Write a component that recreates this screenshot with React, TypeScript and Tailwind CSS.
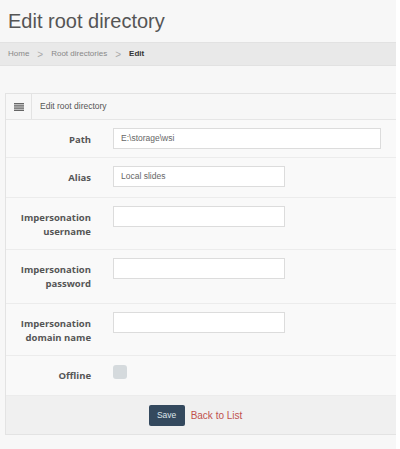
import React from 'react';

const rows = [
  { label: ['Path'], h: 'h-[38px]', value: 'E:\\storage\\wsi', wide: true },
  { label: ['Alias'], h: 'h-[40px]', value: 'Local slides' },
  { label: ['Impersonation', 'username'], h: 'h-[52px]', value: '' },
  { label: ['Impersonation', 'password'], h: 'h-[54px]', value: '' },
  { label: ['Impersonation', 'domain name'], h: 'h-[52px]', value: '' },
];

export default function App() {
  return (
    <div className="w-[400px] h-[449px] bg-white overflow-hidden font-['Liberation_Sans',Arial,sans-serif]">
      <div className="w-[396px] h-full bg-[#f7f7f7]">
        {/* Page title */}
        <h1 className="h-[42px] px-[8px] pt-[9px] text-[20px] leading-[24px] text-[#555]">
          Edit root directory
        </h1>

        {/* Breadcrumb */}
        <div className="h-[24px] bg-[#e9e9e9] border-y border-[#e2e2e2] flex items-center px-[8px] text-[8px] text-[#888]">
          <span>Home</span>
          <span className="mx-[8px] text-[10px] text-[#aaa]">&gt;</span>
          <span>Root directories</span>
          <span className="mx-[8px] text-[10px] text-[#aaa]">&gt;</span>
          <span className="font-bold text-[#333]">Edit</span>
        </div>

        <div className="h-[27px]" />

        {/* Panel */}
        <div className="ml-[5px] border border-r-0 border-[#e3e3e3] bg-[#f9f9f9]">
          <div className="h-[26px] flex items-center border-b border-[#e6e6e6] bg-[#f7f7f7]">
            <div className="w-[26px] h-full flex items-center justify-center border-r border-[#e3e3e3]">
              <svg width="10" height="8" viewBox="0 0 10 8">
                <rect x="0" y="0" width="10" height="1.4" fill="#666" />
                <rect x="0" y="2.2" width="10" height="1.4" fill="#666" />
                <rect x="0" y="4.4" width="10" height="1.4" fill="#666" />
                <rect x="0" y="6.6" width="10" height="1.4" fill="#666" />
              </svg>
            </div>
            <span className="ml-[8px] text-[8.5px] text-[#555]">Edit root directory</span>
          </div>

          {rows.map((r, i) => (
            <div key={i} className={`${r.h} flex pt-[8px] border-b border-[#ececec]`}>
              <div className="w-[85px] pt-[5px] text-right font-['Open_Sans',sans-serif] font-bold text-[9.5px] leading-[14px] text-[#555]">
                {r.label.map((l, j) => (
                  <div key={j}>{l}</div>
                ))}
              </div>
              <div
                className={`ml-[22px] h-[21px] ${r.wide ? 'w-[268px]' : 'w-[172px]'} bg-white border border-[#dcdcdc] flex items-center px-[7px] text-[8.5px] text-[#666]`}
              >
                {r.value}
              </div>
            </div>
          ))}

          <div className="h-[39px] flex pt-[9px]">
            <div className="w-[85px] pt-[4px] text-right font-['Open_Sans',sans-serif] font-bold text-[9.5px] leading-[14px] text-[#555]">
              Offline
            </div>
            <div className="ml-[22px] w-[14px] h-[14px] rounded-[3px] bg-[#d5dadd]" />
          </div>

          <div className="h-[39px] bg-[#f0f0f0] border-t border-[#ececec] flex items-center justify-center gap-[6px] pr-[11px]">
            <button className="w-[36px] h-[21px] rounded-[2px] bg-[#34495e] text-[8.5px] text-[#dfe6ec]">
              Save
            </button>
            <span className="text-[10px] text-[#c0504d]">Back to List</span>
          </div>
        </div>
      </div>
    </div>
  );
}
